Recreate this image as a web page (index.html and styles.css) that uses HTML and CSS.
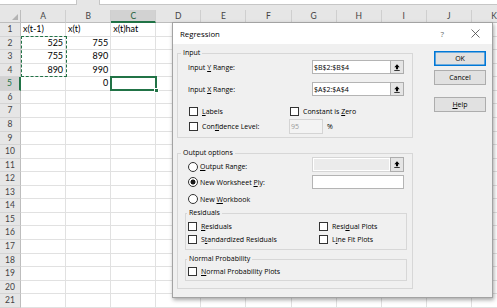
FILE: index.html
```html
<!DOCTYPE html>
<html>
<head>
<meta charset="utf-8">
<link rel="stylesheet" href="styles.css">
</head>
<body>
<div class="app">
  <div class="fbar"><div class="namebox"></div><div class="fgap"></div><div class="formula"></div></div>
  <div class="sheet">
    <div class="corner"><span class="tri"></span></div>
    <div class="ch">A</div><div class="ch">B</div><div class="ch csel">C</div><div class="ch">D</div><div class="ch">E</div><div class="ch">F</div><div class="ch">G</div><div class="ch">H</div><div class="ch">I</div><div class="ch">J</div><div class="ch">K</div>

    <div class="rh">1</div><div class="c">x(t-1)</div><div class="c">x(t)</div><div class="c">x(t)hat</div><div class="c"></div><div class="c"></div><div class="c"></div><div class="c"></div><div class="c"></div><div class="c"></div><div class="c"></div><div class="c"></div>
    <div class="rh">2</div><div class="c n anchor">525<span class="ants"></span></div><div class="c n">755</div><div class="c"></div><div class="c"></div><div class="c"></div><div class="c"></div><div class="c"></div><div class="c"></div><div class="c"></div><div class="c"></div><div class="c"></div>
    <div class="rh">3</div><div class="c n">755</div><div class="c n">890</div><div class="c"></div><div class="c"></div><div class="c"></div><div class="c"></div><div class="c"></div><div class="c"></div><div class="c"></div><div class="c"></div><div class="c"></div>
    <div class="rh">4</div><div class="c n">890</div><div class="c n">990</div><div class="c"></div><div class="c"></div><div class="c"></div><div class="c"></div><div class="c"></div><div class="c"></div><div class="c"></div><div class="c"></div><div class="c"></div>
    <div class="rh rsel">5</div><div class="c"></div><div class="c n">0</div><div class="c anchor"><span class="cur"><span class="handle"></span></span></div><div class="c"></div><div class="c"></div><div class="c"></div><div class="c"></div><div class="c"></div><div class="c"></div><div class="c"></div><div class="c"></div>
    <div class="rh">6</div><div class="c"></div><div class="c"></div><div class="c"></div><div class="c"></div><div class="c"></div><div class="c"></div><div class="c"></div><div class="c"></div><div class="c"></div><div class="c"></div><div class="c"></div>
    <div class="rh">7</div><div class="c"></div><div class="c"></div><div class="c"></div><div class="c"></div><div class="c"></div><div class="c"></div><div class="c"></div><div class="c"></div><div class="c"></div><div class="c"></div><div class="c"></div>
    <div class="rh">8</div><div class="c"></div><div class="c"></div><div class="c"></div><div class="c"></div><div class="c"></div><div class="c"></div><div class="c"></div><div class="c"></div><div class="c"></div><div class="c"></div><div class="c"></div>
    <div class="rh">9</div><div class="c"></div><div class="c"></div><div class="c"></div><div class="c"></div><div class="c"></div><div class="c"></div><div class="c"></div><div class="c"></div><div class="c"></div><div class="c"></div><div class="c"></div>
    <div class="rh">10</div><div class="c"></div><div class="c"></div><div class="c"></div><div class="c"></div><div class="c"></div><div class="c"></div><div class="c"></div><div class="c"></div><div class="c"></div><div class="c"></div><div class="c"></div>
    <div class="rh">11</div><div class="c"></div><div class="c"></div><div class="c"></div><div class="c"></div><div class="c"></div><div class="c"></div><div class="c"></div><div class="c"></div><div class="c"></div><div class="c"></div><div class="c"></div>
    <div class="rh">12</div><div class="c"></div><div class="c"></div><div class="c"></div><div class="c"></div><div class="c"></div><div class="c"></div><div class="c"></div><div class="c"></div><div class="c"></div><div class="c"></div><div class="c"></div>
    <div class="rh">13</div><div class="c"></div><div class="c"></div><div class="c"></div><div class="c"></div><div class="c"></div><div class="c"></div><div class="c"></div><div class="c"></div><div class="c"></div><div class="c"></div><div class="c"></div>
    <div class="rh">14</div><div class="c"></div><div class="c"></div><div class="c"></div><div class="c"></div><div class="c"></div><div class="c"></div><div class="c"></div><div class="c"></div><div class="c"></div><div class="c"></div><div class="c"></div>
    <div class="rh">15</div><div class="c"></div><div class="c"></div><div class="c"></div><div class="c"></div><div class="c"></div><div class="c"></div><div class="c"></div><div class="c"></div><div class="c"></div><div class="c"></div><div class="c"></div>
    <div class="rh">16</div><div class="c"></div><div class="c"></div><div class="c"></div><div class="c"></div><div class="c"></div><div class="c"></div><div class="c"></div><div class="c"></div><div class="c"></div><div class="c"></div><div class="c"></div>
    <div class="rh">17</div><div class="c"></div><div class="c"></div><div class="c"></div><div class="c"></div><div class="c"></div><div class="c"></div><div class="c"></div><div class="c"></div><div class="c"></div><div class="c"></div><div class="c"></div>
    <div class="rh">18</div><div class="c"></div><div class="c"></div><div class="c"></div><div class="c"></div><div class="c"></div><div class="c"></div><div class="c"></div><div class="c"></div><div class="c"></div><div class="c"></div><div class="c"></div>
    <div class="rh">19</div><div class="c"></div><div class="c"></div><div class="c"></div><div class="c"></div><div class="c"></div><div class="c"></div><div class="c"></div><div class="c"></div><div class="c"></div><div class="c"></div><div class="c"></div>
    <div class="rh">20</div><div class="c"></div><div class="c"></div><div class="c"></div><div class="c"></div><div class="c"></div><div class="c"></div><div class="c"></div><div class="c"></div><div class="c"></div><div class="c"></div><div class="c"></div>
    <div class="rh">21</div><div class="c"></div><div class="c"></div><div class="c"></div><div class="c"></div><div class="c"></div><div class="c"></div><div class="c"></div><div class="c"></div><div class="c"></div><div class="c"></div><div class="c"></div>
  </div>

  <div class="dialog">
    <div class="titlebar">
      <span class="title">Regression</span>
      <span class="qm">?</span>
      <svg class="close" viewBox="0 0 9 9"><path d="M0.5 0.5 L8.5 8.5 M8.5 0.5 L0.5 8.5" stroke="#444" stroke-width="0.8" fill="none"/></svg>
    </div>
    <div class="dbody">
      <div class="left">
        <div class="group g-in">
          <div class="gtitle">Input</div>
          <div class="range-row ry">
            <span class="lbl">Input <u>Y</u> Range:</span>
            <div class="ref"><span class="tb">$B$2:$B$4</span><span class="rbtn"><svg class="ico" viewBox="0 0 7 8"><path d="M3.5 0.3 L6.6 3.7 H4.7 V6.1 H2.3 V3.7 H0.4 Z" fill="#000"/><rect x="0.3" y="6.9" width="6.4" height="0.9" fill="#000"/></svg></span></div>
          </div>
          <div class="range-row rx">
            <span class="lbl">Input <u>X</u> Range:</span>
            <div class="ref"><span class="tb">$A$2:$A$4</span><span class="rbtn"><svg class="ico" viewBox="0 0 7 8"><path d="M3.5 0.3 L6.6 3.7 H4.7 V6.1 H2.3 V3.7 H0.4 Z" fill="#000"/><rect x="0.3" y="6.9" width="6.4" height="0.9" fill="#000"/></svg></span></div>
          </div>
          <div class="crow c-labels">
            <div class="ccol"><span class="cb"></span><span><u>L</u>abels</span></div>
            <div class="ccol"><span class="cb"></span><span>Constant is <u>Z</u>ero</span></div>
          </div>
          <div class="crow c-conf">
            <div class="ccol"><span class="cb"></span><span>Con<u>f</u>idence Level:</span></div>
            <div class="ccol"><span class="tb dis95">95</span><span class="pct">%</span></div>
          </div>
        </div>

        <div class="group g-out">
          <div class="gtitle">Output options</div>
          <div class="orow o1">
            <div class="opt"><span class="rb"></span><span><u>O</u>utput Range:</span></div>
            <div class="ref"><span class="tb dis"></span><span class="rbtn"><svg class="ico" viewBox="0 0 7 8"><path d="M3.5 0.3 L6.6 3.7 H4.7 V6.1 H2.3 V3.7 H0.4 Z" fill="#000"/><rect x="0.3" y="6.9" width="6.4" height="0.9" fill="#000"/></svg></span></div>
          </div>
          <div class="orow o2">
            <div class="opt"><span class="rb on"></span><span>New Worksheet <u>P</u>ly:</span></div>
            <span class="tb wide"></span>
          </div>
          <div class="orow o3">
            <div class="opt"><span class="rb"></span><span>New <u>W</u>orkbook</span></div>
          </div>
          <div class="sub s-res">
            <div class="gtitle">Residuals</div>
            <div class="srow sr1">
              <div class="ccol"><span class="cb"></span><span><u>R</u>esiduals</span></div>
              <div class="ccol"><span class="cb"></span><span>Resi<u>d</u>ual Plots</span></div>
            </div>
            <div class="srow sr2">
              <div class="ccol"><span class="cb"></span><span>S<u>t</u>andardized Residuals</span></div>
              <div class="ccol"><span class="cb"></span><span>L<u>i</u>ne Fit Plots</span></div>
            </div>
          </div>
          <div class="sub s-np">
            <div class="gtitle">Normal Probability</div>
            <div class="srow sr1">
              <div class="ccol"><span class="cb"></span><span><u>N</u>ormal Probability Plots</span></div>
            </div>
          </div>
        </div>
      </div>
      <div class="buttons">
        <div class="btn def">OK</div>
        <div class="btn">Cancel</div>
        <div class="btn help"><span><u>H</u>elp</span></div>
      </div>
    </div>
  </div>
</div>
</body>
</html>
```

FILE: styles.css
```css
* { box-sizing: border-box; }
html, body { margin: 0; }
body {
  width: 497px;
  height: 308px;
  overflow: hidden;
  background: #fff;
  font-family: Lato, "Liberation Sans", sans-serif;
}
.app { position: relative; width: 497px; height: 308px; overflow: hidden; }

/* formula bar strip */
.fbar { display: flex; height: 10px; background: #e6e6e6; }
.namebox { width: 77px; height: 5px; background: #fff; border: 1px solid #c6c6c6; border-top: 0; border-left: 0; }
.fgap { width: 22px; }
.formula { flex: 1; height: 5px; background: #fff; border: 1px solid #c6c6c6; border-top: 0; border-right: 0; }

/* grid */
.sheet {
  --rh: 13.57px;
  display: grid;
  grid-template-columns: 21px repeat(11, 45.1px);
  grid-template-rows: 13px repeat(21, var(--rh));
  font-size: 9px;
  color: #000;
}
.corner {
  background: #e6e6e6;
  border-right: 1px solid #bdbdbd;
  border-bottom: 1px solid #bdbdbd;
  display: flex;
  align-items: flex-end;
  justify-content: flex-end;
  padding: 0 2px 2px 0;
}
.tri { width: 0; height: 0; border-left: 6px solid transparent; border-bottom: 6px solid #b3b3b3; }
.ch {
  background: #e6e6e6;
  border-right: 1px solid #cfcfcf;
  border-bottom: 1px solid #bdbdbd;
  text-align: center;
  font-size: 8.5px;
  line-height: 12px;
  color: #444;
}
.ch.csel { background: #d2d2d2; border-bottom: 2px solid #217346; color: #1e5f3a; }
.rh {
  background: #e6e6e6;
  border-right: 1px solid #bdbdbd;
  border-bottom: 1px solid #d4d4d4;
  text-align: center;
  font-size: 8.5px;
  line-height: 12.5px;
  color: #444;
}
.rh.rsel { background: #d2d2d2; border-right: 2px solid #217346; color: #217346; }
.c {
  border-right: 1px solid #e1e1e1;
  border-bottom: 1px solid #e1e1e1;
  padding: 0 2px;
  line-height: 12.5px;
  white-space: nowrap;
  min-width: 0;
}
.c.n { text-align: right; }
.anchor { position: relative; }
.ants {
  position: absolute;
  left: 0;
  top: -1px;
  width: 45.6px;
  height: calc(3 * var(--rh) + 1px);
  border: 1.5px dashed #217346;
}
.cur {
  position: absolute;
  left: -1px;
  top: -1px;
  width: 46.5px;
  height: 15px;
  border: 2px solid #217346;
}
.handle {
  position: absolute;
  right: -4px;
  bottom: -4px;
  width: 5px;
  height: 5px;
  background: #217346;
  border: 1px solid #fff;
}

/* dialog */
.dialog {
  position: absolute;
  left: 172px;
  top: 22px;
  width: 321px;
  height: 276px;
  border: 1px solid #a3a3a3;
  background: #f0f0f0;
  box-shadow: 1px 2px 4px rgba(0, 0, 0, 0.35);
  font-family: "Open Sans", "Noto Sans", sans-serif;
  font-size: 7px;
  color: #000;
}
.titlebar {
  height: 21px;
  background: #fff;
  display: flex;
  align-items: center;
  padding: 0 12px 0 7px;
}
.title { font-size: 7.8px; }
.qm { margin-left: auto; margin-right: 27px; font-size: 8px; color: #666; }
.close { width: 9px; height: 9px; display: block; }

.dbody { display: flex; padding: 7px 6px 0 4px; gap: 21px; }
.left { width: 236px; padding-top: 2px; }

.group { border: 1px solid #d7d7d7; }
.gtitle {
  width: max-content;
  height: 10px;
  line-height: 10px;
  margin-top: -6px;
  padding: 0 2px;
  background: #f0f0f0;
}
.g-in { padding: 0 8px 3px 10px; }
.g-in > .gtitle { margin-left: -7px; }

.range-row { display: flex; align-items: center; height: 14px; }
.range-row .lbl { width: 124px; }
.ry { margin-top: 2px; }
.rx { margin-top: 8px; }
.ref { display: flex; width: 92px; height: 100%; }
.tb {
  flex: 1;
  height: 100%;
  border: 1px solid #b4b4b4;
  background: #fff;
  padding: 0 1px;
  display: flex;
  align-items: center;
  white-space: nowrap;
}
.tb.dis { background: #ebebeb; border-color: #d6d6d6; box-shadow: inset 0 0 0 1px #fff; }
.tb.wide { flex: none; width: 92px; }
.rbtn {
  width: 14px;
  flex: none;
  margin-left: -1px;
  border: 1px solid #adadad;
  background: #e5e5e5;
  display: flex;
  align-items: center;
  justify-content: center;
}
.ico { width: 6px; height: 7px; display: block; }

.crow { display: flex; align-items: center; }
.ccol { display: flex; align-items: center; }
.c-labels { height: 13px; margin-top: 9px; }
.c-conf { height: 15px; margin-top: 1px; }
.g-in .ccol:first-child { width: 102px; padding-left: 1px; }
.cb {
  width: 9px;
  height: 9px;
  flex: none;
  border: 1px solid #333;
  background: #fff;
  margin-right: 4px;
}
.tb.dis95 {
  flex: none;
  width: 34px;
  height: 15px;
  margin-left: -1px;
  background: #f3f3f3;
  border-color: #d4d4d4;
  color: #9a9a9a;
}
.pct { margin-left: 4px; }

.g-out { margin-top: 15px; padding: 0 5px 7px 7px; }
.g-out > .gtitle { margin-left: -4px; }
.orow { display: flex; align-items: center; }
.opt { display: flex; align-items: center; width: 127px; padding-left: 3px; }
.o1 { height: 15px; margin-top: -1px; }
.o1 .opt { margin-top: 4px; }
.o2 { height: 14px; margin-top: 3px; }
.o3 { height: 12px; margin-top: 4px; }
.rb {
  width: 10px;
  height: 10px;
  flex: none;
  border: 1px solid #333;
  border-radius: 50%;
  background: #fff;
  margin-right: 2px;
}
.rb.on { background: radial-gradient(circle, #1a1a1a 0 2.2px, #fff 2.8px); }

.sub { border: 1px solid #d7d7d7; padding: 0 0 4px 2px; }
.sub > .gtitle { margin-left: -1px; }
.s-res { margin-top: 8px; }
.s-np { margin-top: 9px; padding-bottom: 3px; }
.srow { display: flex; align-items: center; height: 11px; }
.srow .ccol:first-child { width: 131px; }
.sr1 { margin-top: 3px; }
.sr2 { margin-top: 2px; }
.s-np .sr1 { margin-top: 2px; }

.buttons { width: 52px; display: flex; flex-direction: column; }
.btn {
  height: 15px;
  border: 1px solid #adadad;
  background: #e1e1e1;
  display: flex;
  align-items: center;
  justify-content: center;
}
.btn.def { border-color: #0078d7; box-shadow: inset 0 0 0 0.6px #0078d7; }
.btn + .btn { margin-top: 4px; }
.btn.help { margin-top: 12px; }
```
